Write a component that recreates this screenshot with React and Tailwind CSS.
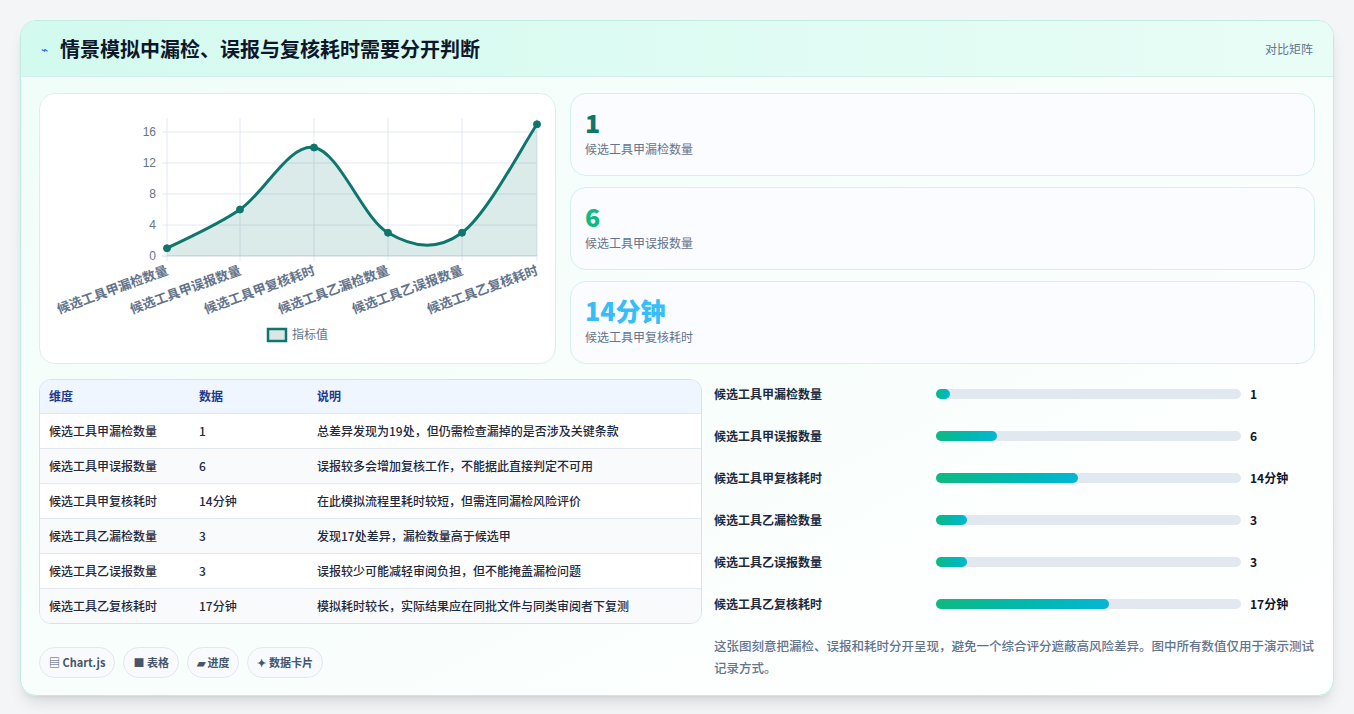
const data = [
  { name: "候选工具甲漏检数量", value: 1, label: "1", note: "总差异发现为19处，但仍需检查漏掉的是否涉及关键条款" },
  { name: "候选工具甲误报数量", value: 6, label: "6", note: "误报较多会增加复核工作，不能据此直接判定不可用" },
  { name: "候选工具甲复核耗时", value: 14, label: "14分钟", note: "在此模拟流程里耗时较短，但需连同漏检风险评价" },
  { name: "候选工具乙漏检数量", value: 3, label: "3", note: "发现17处差异，漏检数量高于候选甲" },
  { name: "候选工具乙误报数量", value: 3, label: "3", note: "误报较少可能减轻审阅负担，但不能掩盖漏检问题" },
  { name: "候选工具乙复核耗时", value: 17, label: "17分钟", note: "模拟耗时较长，实际结果应在同批文件与同类审阅者下复测" },
];

const xs = [127, 200, 274, 348, 422, 497];
const yOf = (v) => 162 - v * 7.75;

function smoothPath(pts) {
  let d = `M${pts[0][0]},${pts[0][1]}`;
  for (let i = 0; i < pts.length - 1; i++) {
    const p0 = pts[i - 1] || pts[i];
    const p1 = pts[i];
    const p2 = pts[i + 1];
    const p3 = pts[i + 2] || p2;
    const t = 0.17;
    const c1 = [p1[0] + (p2[0] - p0[0]) * t, p1[1] + (p2[1] - p0[1]) * t];
    const c2 = [p2[0] - (p3[0] - p1[0]) * t, p2[1] - (p3[1] - p1[1]) * t];
    d += ` C${c1[0]},${c1[1]} ${c2[0]},${c2[1]} ${p2[0]},${p2[1]}`;
  }
  return d;
}

const Chart = () => {
  const pts = data.map((d, i) => [xs[i], yOf(d.value)]);
  const line = smoothPath(pts);
  return (
    <svg width="516" height="269" className="block">
      {xs.map((x) => (
        <line key={x} x1={x} x2={x} y1="24" y2="167" stroke="#e2e8f0" />
      ))}
      {[0, 4, 8, 12, 16].map((v) => (
        <g key={v}>
          <line x1="122" x2="497" y1={yOf(v)} y2={yOf(v)} stroke={v === 0 ? "#cbd5e1" : "#e2e8f0"} />
          <text x="116" y={yOf(v) + 4} textAnchor="end" fontSize="12" fill="#64748b" fontFamily="Liberation Sans, sans-serif">{v}</text>
        </g>
      ))}
      <path d={`${line} L497,162 L127,162 Z`} fill="#0f766e" fillOpacity="0.15" />
      <path d={line} fill="none" stroke="#0f766e" strokeWidth="3" />
      {pts.map(([x, y]) => (
        <circle key={x} cx={x} cy={y} r="3.5" fill="#0f766e" stroke="#0f766e" />
      ))}
      {data.map((d, i) => (
        <text key={d.name} x={xs[i] + 2} y="180" textAnchor="end" fontSize="13" fontWeight="600" fill="#64748b" transform={`rotate(-20 ${xs[i] + 2} 180)`} fontFamily="'Noto Sans CJK SC', sans-serif">{d.name}</text>
      ))}
      <rect x="228" y="235" width="18" height="12" fill="#dbe7e6" stroke="#0f766e" strokeWidth="2.5" />
      <text x="252" y="245" fontSize="12" fill="#64748b" fontFamily="'Noto Sans CJK SC', sans-serif">指标值</text>
    </svg>
  );
};

const Stat = ({ value, label, color }) => (
  <div className="flex h-[83px] flex-col justify-start rounded-2xl border border-[#d6f0ea] bg-[#fafcff] px-[14px] pt-[10px]">
    <div className={`text-[25px] font-extrabold leading-9 ${color}`}>{value}</div>
    <div className="text-[12px] text-slate-500">{label}</div>
  </div>
);

export default function App() {
  return (
    <div className="min-h-screen bg-[#f4f5f6] px-5 py-5" style={{ fontFamily: "'Noto Sans CJK SC', 'Noto Sans', sans-serif" }}>
      <div className="overflow-hidden rounded-2xl border border-[#bfeee0] bg-gradient-to-br from-[#f0fdf9] to-white shadow-lg">
        <div className="flex h-[56px] items-center justify-between border-b border-[#d4efe8] bg-gradient-to-r from-[#d3faef] to-[#e8fdf6] px-5">
          <div className="flex items-center gap-3">
            <span className="text-[12px] text-blue-600">⌁</span>
            <h1 className="text-[20px] font-bold text-slate-900">情景模拟中漏检、误报与复核耗时需要分开判断</h1>
          </div>
          <span className="text-[12px] text-slate-500">对比矩阵</span>
        </div>
        <div className="px-[18px] pb-4 pt-4">
          <div className="flex gap-[14px]">
            <div className="w-[517px] shrink-0 rounded-2xl border border-[#e2ecf0] bg-white">
              <Chart />
            </div>
            <div className="flex flex-1 flex-col gap-[11px]">
              <Stat value="1" label="候选工具甲漏检数量" color="text-[#0f766e]" />
              <Stat value="6" label="候选工具甲误报数量" color="text-[#10b981]" />
              <Stat value="14分钟" label="候选工具甲复核耗时" color="text-[#38bdf8]" />
            </div>
          </div>
          <div className="mt-[15px] flex gap-[12px]">
            <div className="w-[663px] shrink-0">
              <div className="overflow-hidden rounded-xl border border-[#d7e2ee]">
                <table className="w-full text-left text-[12px]">
                  <thead className="bg-[#eff6ff] text-[#1e3a8a]">
                    <tr className="h-[33px]">
                      <th className="w-[159px] pl-[9px] font-semibold">维度</th>
                      <th className="w-[118px] font-semibold">数据</th>
                      <th className="font-semibold">说明</th>
                    </tr>
                  </thead>
                  <tbody className="text-slate-800">
                    {data.map((d, i) => (
                      <tr key={d.name} className={`h-[35px] border-t border-[#e2e8f0] ${i % 2 ? "bg-[#f8fafc]" : "bg-white"}`}>
                        <td className="pl-[9px] font-medium">{d.name}</td>
                        <td className="font-medium">{d.label}</td>
                        <td className="font-medium">{d.note}</td>
                      </tr>
                    ))}
                  </tbody>
                </table>
              </div>
              <div className="mt-[23px] flex gap-2 text-[11px] font-semibold text-slate-600">
                <span className="rounded-full border border-[#e2e8f0] bg-[#f8fafc] px-[9px] py-[6px]">▤ Chart.js</span>
                <span className="rounded-full border border-[#e2e8f0] bg-[#f8fafc] px-[9px] py-[6px]">■ 表格</span>
                <span className="rounded-full border border-[#e2e8f0] bg-[#f8fafc] px-[9px] py-[6px]">▰ 进度</span>
                <span className="rounded-full border border-[#e2e8f0] bg-[#f8fafc] px-[9px] py-[6px]">✦ 数据卡片</span>
              </div>
            </div>
            <div className="flex-1">
              <div className="-mt-[6px] flex flex-col">
                {data.map((d) => (
                  <div key={d.name} className="flex h-[42px] items-center text-[12px] font-semibold text-slate-800">
                    <span className="w-[222px]">{d.name}</span>
                    <div className="h-[10px] w-[305px] rounded-full bg-[#e2e8f0]">
                      <div className="h-full rounded-full bg-gradient-to-r from-[#10b981] to-[#06b6d4]" style={{ width: `${Math.max(4.5, (d.value / 30) * 100)}%` }} />
                    </div>
                    <span className="ml-[9px] text-slate-900">{d.label}</span>
                  </div>
                ))}
              </div>
              <p className="mt-[10px] text-[12.5px] font-medium leading-[22px] text-slate-500">
                这张图刻意把漏检、误报和耗时分开呈现，避免一个综合评分遮蔽高风险差异。图中所有数值仅用于演示测试记录方式。
              </p>
            </div>
          </div>
        </div>
      </div>
    </div>
  );
}
